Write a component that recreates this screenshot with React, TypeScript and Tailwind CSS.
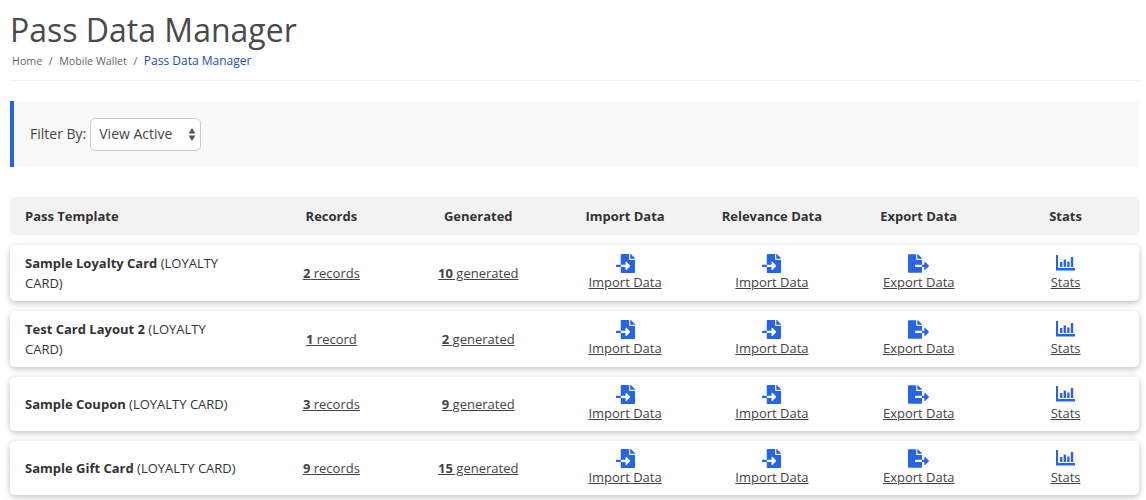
import { FaFileImport, FaFileExport } from 'react-icons/fa'

const rows = [
  { name: 'Sample Loyalty Card', records: '2', recordLabel: ' records', generated: '10', tall: true },
  { name: 'Test Card Layout 2', records: '1', recordLabel: ' record', generated: '2', tall: true },
  { name: 'Sample Coupon', records: '3', recordLabel: ' records', generated: '9', tall: false },
  { name: 'Sample Gift Card', records: '9', recordLabel: ' records', generated: '15', tall: false },
]

const headers = ['Records', 'Generated', 'Import Data', 'Relevance Data', 'Export Data', 'Stats']

function StatsIcon() {
  return (
    <svg width="19" height="17" viewBox="0 0 19 17" fill="#2563eb">
      <path d="M0 0h2v13H19v2.4H0z" />
      <rect x="4" y="7" width="2.4" height="5" />
      <rect x="7.6" y="4.5" width="2.4" height="7.5" />
      <rect x="11.2" y="6.5" width="2.4" height="5.5" />
      <rect x="14.8" y="2" width="2.4" height="10" />
    </svg>
  )
}

function ActionLink({ icon, label }: { icon: React.ReactNode; label: string }) {
  return (
    <a className="flex flex-col items-center pb-[2px] text-[13px] leading-[18px] text-[#444] underline">
      <span className="flex h-[19px] items-center justify-center">{icon}</span>
      {label}
    </a>
  )
}

export default function App() {
  return (
    <div className="h-[500px] overflow-hidden bg-white pl-[10px] pr-[7px] font-['Open_Sans',sans-serif] text-[#333]">
      <h1 className="pt-[8px] text-[32px] leading-[43px] text-[#4a4a4a]">Pass Data Manager</h1>
      <div className="flex h-[30px] items-start gap-[6.5px] border-b border-[#f2f2f2] pl-[2px] pt-[2px] text-[10.7px] leading-[16px] text-[#666]">
        <span>Home</span>
        <span>/</span>
        <span>Mobile Wallet</span>
        <span>/</span>
        <span className="text-[12px] text-[#1e4bb0]">Pass Data Manager</span>
      </div>

      <div className="mt-[20px] flex h-[66px] items-center gap-[4px] border-l-4 border-[#2563eb] bg-[#f9f9f9] pl-[16px] text-sm text-[#444]">
        <span>Filter By:</span>
        <div className="relative flex h-[33px] w-[111px] items-center rounded-[5px] border border-[#ccc] bg-white pl-[8px] text-sm">
          View Active
          <svg className="absolute right-[4px] top-[9px]" width="8" height="14" viewBox="0 0 8 14" fill="#555">
            <path d="M4 0l3.4 5.4H.6zM4 13L.6 7.6h6.8z" />
          </svg>
        </div>
      </div>

      <div className="mt-[30px] grid h-[38px] grid-cols-[248px_repeat(6,1fr)] items-center rounded-[5px] bg-[#f2f2f2] pt-[1px] text-[13px] font-bold text-[#333]">
        <div className="pl-[15px]">Pass Template</div>
        {headers.map(h => (
          <div key={h} className="text-center">{h}</div>
        ))}
      </div>

      <div className="mt-[10px] flex flex-col gap-[10px]">
        {rows.map(row => (
          <div
            key={row.name}
            className={`grid grid-cols-[248px_repeat(6,1fr)] items-center rounded-[5px] bg-white text-[13px] text-[#333] shadow-[0_2px_6px_rgba(0,0,0,0.25)] ${row.tall ? 'h-[56px]' : 'h-[54px]'}`}
          >
            <div className="pl-[15px] pr-[15px] leading-[20px]">
              <b>{row.name}</b> (LOYALTY CARD)
            </div>
            <div className="pt-[1px] text-center">
              <a className="text-[#444] underline"><b>{row.records}</b>{row.recordLabel}</a>
            </div>
            <div className="pt-[1px] text-center">
              <a className="text-[#444] underline"><b>{row.generated}</b> generated</a>
            </div>
            <ActionLink icon={<FaFileImport size={19} color="#2563eb" />} label="Import Data" />
            <ActionLink icon={<FaFileImport size={19} color="#2563eb" />} label="Import Data" />
            <ActionLink icon={<FaFileExport size={21} color="#2563eb" />} label="Export Data" />
            <ActionLink icon={<StatsIcon />} label="Stats" />
          </div>
        ))}
      </div>
    </div>
  )
}
